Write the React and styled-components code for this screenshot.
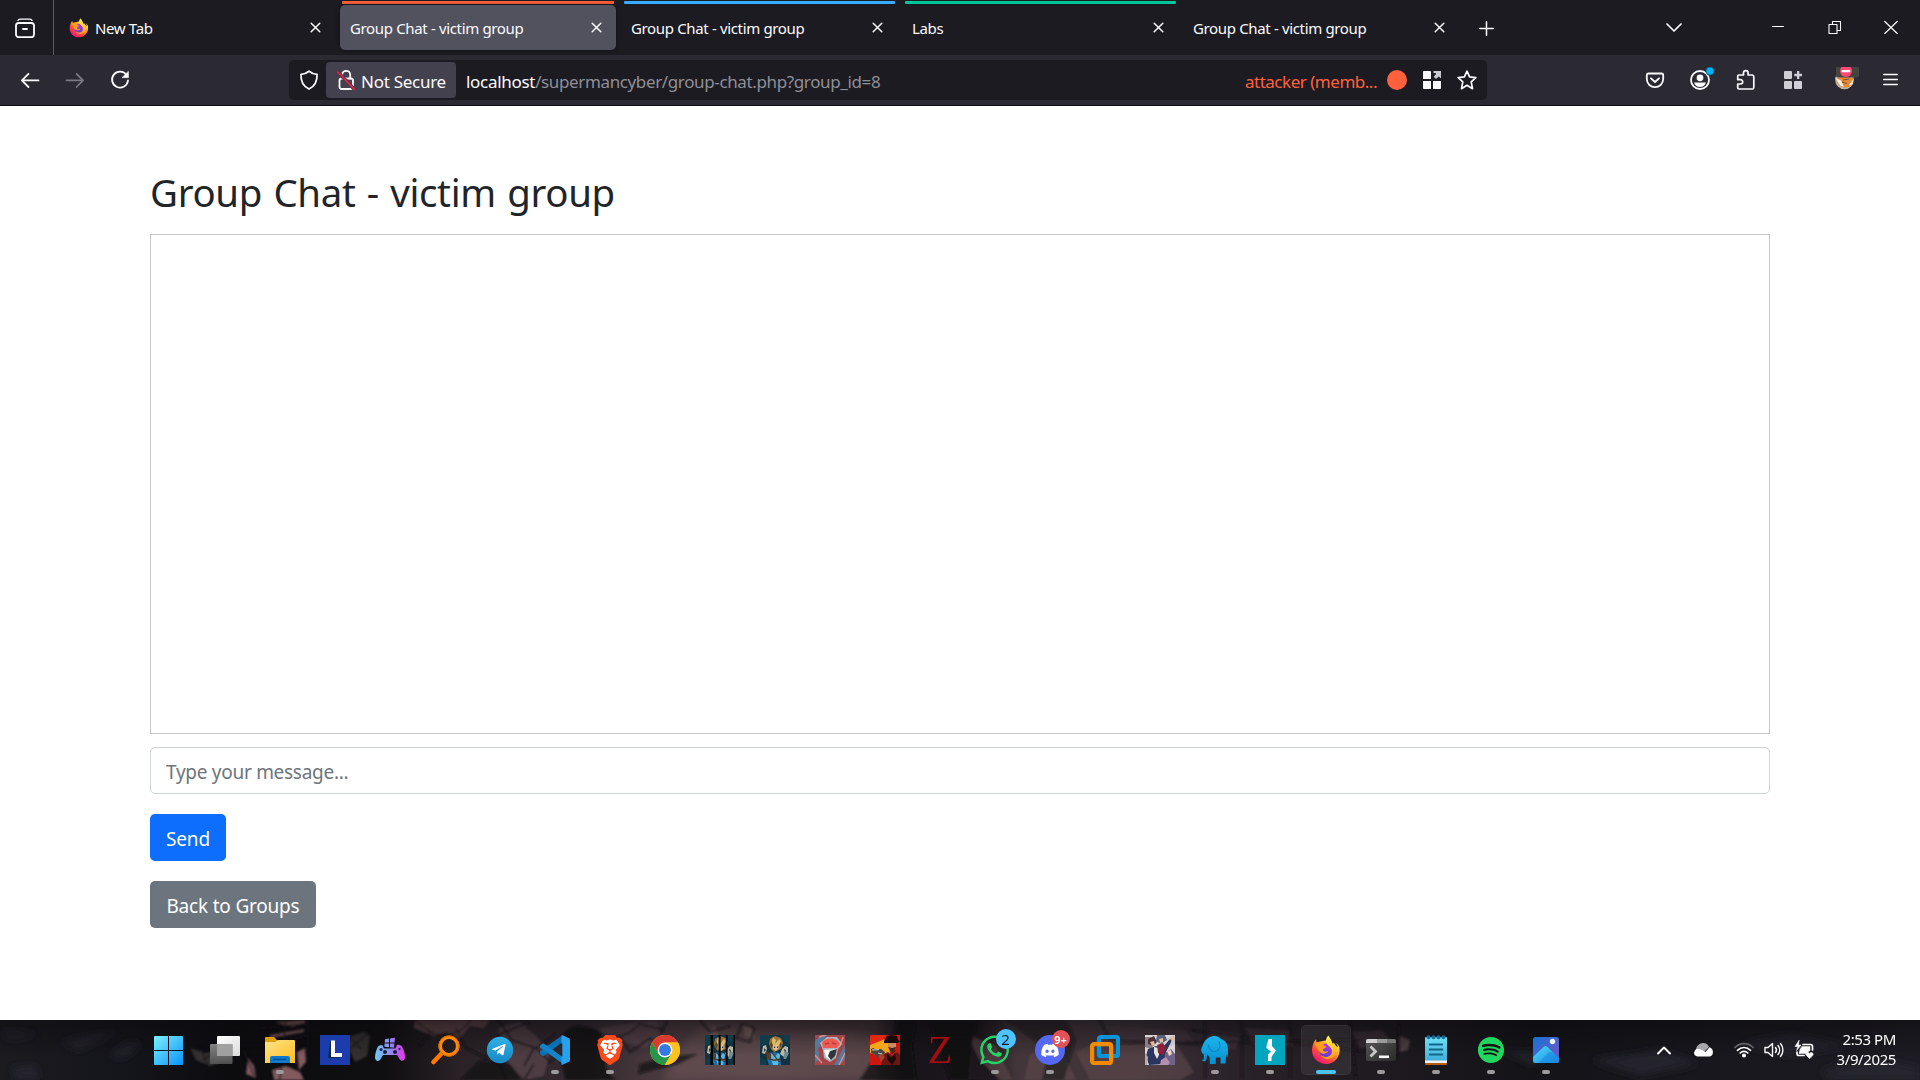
import React from "react";
import styled, { createGlobalStyle, css } from "styled-components";
import { FaDiscord, FaSpotify, FaWhatsapp, FaTelegramPlane } from "react-icons/fa";
import { SiBrave } from "react-icons/si";

const Global = createGlobalStyle`
  *, *::before, *::after { box-sizing: border-box; }
  html, body { margin: 0; padding: 0; height: 100%; overflow: hidden; }
  body { font-family: "Noto Sans", "Open Sans", sans-serif; background: #fff; }
  svg { display: block; flex: none; }
`;

const Screen = styled.div`
  width: 1920px;
  height: 1080px;
  display: flex;
  flex-direction: column;
  overflow: hidden;
`;

/* ---------- browser chrome ---------- */

const TabStrip = styled.header`
  height: 55px;
  display: flex;
  align-items: stretch;
  background: #1c1b22;
  color: #fbfbfe;
`;

const FirefoxView = styled.div`
  width: 54px;
  padding: 18px 0 0 15px;
  border-right: 1px solid #5b5b66;
`;

const Tab = styled.div`
  width: ${(p) => p.$w || 281}px;
  padding: 0 5px 0 0;
  display: flex;
  flex-direction: column;
`;

const TabLine = styled.div`
  height: 3px;
  margin: 1px 2px 1px ${(p) => (p.$active ? 2 : 3)}px;
  border-radius: 1px;
  background: ${(p) => p.$color || "transparent"};
`;

const TabBody = styled.div`
  height: 45px;
  padding: 0 14px 0 ${(p) => p.$pad || 10}px;
  display: flex;
  align-items: center;
  border-radius: 5px;
  ${(p) =>
    p.$active &&
    css`
      background: #52525e;
      box-shadow: 0 0 4px rgba(0, 0, 0, 0.45);
    `}
`;

const TabTitle = styled.span`
  flex: 1;
  font-size: 15px;
  line-height: 20px;
  padding-top: 1px;
  white-space: nowrap;
  letter-spacing: -0.35px;
`;

const Favicon = styled.span`
  width: 20px;
  margin-right: 6px;
`;

const NewTabButton = styled.div`
  padding: 21px 0 0 15px;
`;

const WindowControls = styled.div`
  margin-left: auto;
  display: flex;
  padding-top: 20px;
`;

const Control = styled.div`
  width: ${(p) => p.$w}px;
  display: flex;
  justify-content: center;
`;

const NavBar = styled.nav`
  height: 51px;
  display: flex;
  align-items: flex-start;
  background: #2b2a33;
  border-bottom: 1px solid #0d0c12;
  color: #fbfbfe;
`;

const NavButtons = styled.div`
  width: 289px;
  padding: 15px 0 0 20px;
  display: flex;
  gap: 25px;
`;

const UrlBar = styled.div`
  width: 1198px;
  height: 40px;
  margin-top: 5px;
  padding: 2px 10px 2px 10px;
  display: flex;
  align-items: center;
  border-radius: 5px;
  background: #1c1b22;
  font-size: 17px;
`;

const Insecure = styled.div`
  width: 130px;
  height: 36px;
  margin-left: 7px;
  padding-left: 11px;
  display: flex;
  align-items: center;
  gap: 5px;
  border-radius: 4px;
  background: #42414d;
  white-space: nowrap;
`;

const BarText = styled.span`
  padding-top: 3px;
  line-height: 24px;
  white-space: nowrap;
  color: ${(p) => p.$color || "#fbfbfe"};
  letter-spacing: ${(p) => p.$ls || -0.3}px;
`;

const Address = styled.div`
  flex: 1;
  margin-left: 10px;
  display: flex;
`;

const Dot = styled.span`
  width: 20px;
  height: 20px;
  margin: 0 16px 0 10px;
  border-radius: 50%;
  background: #ff613d;
`;

const StarSlot = styled.span`
  margin-left: 16px;
`;

const Actions = styled.div`
  margin-left: auto;
  padding: 12px 10px 0 0;
  display: flex;
  align-items: flex-start;
`;

const Action = styled.div`
  width: ${(p) => p.$w || 47}px;
  display: flex;
  justify-content: center;
`;

/* ---------- page ---------- */

const Page = styled.main`
  flex: 1;
  padding: 62px 150px 0;
  background: #fff;
  color: #212529;
`;

const Title = styled.h2`
  margin: 0 0 18px;
  font-size: 38.4px;
  line-height: 48px;
  font-weight: 400;
  letter-spacing: -0.3px;
  word-spacing: 1.600px;
`;

const ChatBox = styled.section`
  height: 500px;
  border: 1px solid #ccc;
`;

const MessageInput = styled.input`
  display: block;
  width: 100%;
  height: 47px;
  margin: 13px 0 20px;
  padding: 2px 15px 0;
  border: 1px solid #ced4da;
  border-radius: 5px;
  outline: 0;
  font: 400 19px/30px "Noto Sans", sans-serif;
  letter-spacing: -0.28px;
  &::placeholder {
    color: #6c757d;
    opacity: 1;
  }
`;

const Button = styled.button`
  display: block;
  width: ${(p) => p.$w}px;
  height: 47px;
  margin: 0 0 20px;
  padding: 3px 0 0;
  border: 0;
  border-radius: 5px;
  background: ${(p) => p.$bg};
  color: #fff;
  text-align: center;
  font: 400 19px/30px "Noto Sans", sans-serif;
  letter-spacing: -0.2px;
`;

/* ---------- taskbar ---------- */

const Taskbar = styled.footer`
  height: 60px;
  position: relative;
  display: flex;
  color: #fff;
  background: #17161a;
`;

const Wallpaper = styled.svg`
  position: absolute;
  inset: 0;
`;

const Apps = styled.div`
  position: relative;
  display: flex;
  padding-left: 140.5px;
`;

const AppButton = styled.div`
  position: relative;
  width: ${(p) => p.$w || 55}px;
  height: ${(p) => (p.$active ? 50 : 60)}px;
  margin: ${(p) => (p.$active ? "5px 2.5px 0 3.5px" : "0")};
  padding-top: ${(p) => (p.$active ? 10 : 15)}px;
  display: flex;
  flex-direction: column;
  align-items: center;
  gap: 5px;
  border-radius: 5px;
  ${(p) =>
    p.$active &&
    css`
      background: rgba(255, 255, 255, 0.07);
      box-shadow: inset 0 0 0 1px rgba(255, 255, 255, 0.05);
    `}
`;

const Pill = styled.span`
  width: ${(p) => (p.$active ? 20 : 8)}px;
  height: 4px;
  border-radius: 2px;
  background: ${(p) => (p.$active ? "#4cc2ff" : "#9d9a9b")};
`;

const Badge = styled.span`
  position: absolute;
  top: ${(p) => p.$top}px;
  left: ${(p) => p.$left}px;
  width: ${(p) => p.$size}px;
  height: ${(p) => p.$size}px;
  border-radius: 50%;
  display: flex;
  align-items: center;
  justify-content: center;
  background: ${(p) => p.$bg};
  color: ${(p) => p.$fg};
  font-size: ${(p) => p.$font}px;
  font-weight: ${(p) => p.$weight || 400};
  line-height: 1;
`;

const Tray = styled.div`
  position: relative;
  margin-left: auto;
  padding-right: 24px;
  display: flex;
  align-items: center;
`;

const TrayIcon = styled.div`
  width: ${(p) => p.$w}px;
  display: flex;
  justify-content: center;
`;

const Clock = styled.div`
  width: 72px;
  padding-bottom: 2px;
  text-align: right;
  font-size: 15px;
  line-height: 20px;
  letter-spacing: -0.4px;
  white-space: nowrap;
`;

/* ---------- chrome icons ---------- */

const Line = ({ w = 20, h = w, vb, sw = 1.6, color = "#fbfbfe", children }) => (
  <svg width={w} height={h} viewBox={vb || `0 0 ${w} ${h}`} fill="none" stroke={color}
    strokeWidth={sw} strokeLinecap="round" strokeLinejoin="round">
    {children}
  </svg>
);

const CloseIcon = () => (
  <Line w={11} sw={1.5}><path d="M1.200 1.200l8.600 8.600M9.800 1.200L1.200 9.800" /></Line>
);

const Firefox = ({ size, id }) => (
  <svg width={size} height={size} viewBox="0 0 30 30">
    <defs>
      <linearGradient id={`${id}a`} x1="0.85" y1="0.1" x2="0.2" y2="0.95">
        <stop offset="0" stopColor="#fff44f" />
        <stop offset="0.35" stopColor="#ffa51f" />
        <stop offset="0.65" stopColor="#ff4a3d" />
        <stop offset="1" stopColor="#e8107c" />
      </linearGradient>
      <linearGradient id={`${id}b`} x1="0.7" y1="0" x2="0.3" y2="1">
        <stop offset="0" stopColor="#b833e1" />
        <stop offset="1" stopColor="#5b3fd6" />
      </linearGradient>
      <linearGradient id={`${id}c`} x1="0.5" y1="0" x2="0.8" y2="1">
        <stop offset="0" stopColor="#fff14a" />
        <stop offset="0.6" stopColor="#ffc52a" />
        <stop offset="1" stopColor="#ff8a1d" />
      </linearGradient>
    </defs>
    <path fill={`url(#${id}a)`} d="M28.5 12.5c-.6-2-2-3.700-3.200-4.600.9 1.700 1.400 3 1.400 4.300L17 5 5.600 7.200C5.200 6.400 5 5.400 5.100 4 2.800 6.200 1.400 10 1 14.600.6 23 7 29 15 29c8.500 0 14.800-7.500 13.500-16.500z" />
    <path fill={`url(#${id}b)`} d="M9 12c2-4 9-5 12-1 3 5 0 11-6 11S7 17 9 12z" />
    <path fill={`url(#${id}c)`} d="M17.500.5c-3 2.500-3 6.500-1.500 8.500 2 2.500 4.700 3.500 5 7 .2 3.500-2.500 6-6 6-2.500 0-4-1-5-2 2 5.500 11 5.500 14 0 2.500-4.500 1.500-9.500-1.500-12.500-.2 1-.5 1.500-1 2C21.500 6 19 3.500 17.500.5z" />
    <path fill="#ff9a22" d="M4.200 8.200c2-1.400 4.600-.9 6 .6 1.500-.8 3-.8 4-.4-1.200.5-1.800 1.400-1.900 2 1.200.6 3.200.6 3.200 1.300-.2 1.200-2.400 1.500-3.400 2.400-.4 1 .2 2 1.400 2.300 1.500.2 2.500-.6 3.700-.1-1 2.400-5 3.500-7.700 1.500C7 16 5 11 4.200 8.200z" />
  </svg>
);

const FirefoxViewIcon = () => (
  <Line w={20} sw={1.8}>
    <path d="M3 2.300c.5-.8 1.200-1.200 2.200-1.200h9.600c1 0 1.700.4 2.200 1.200" strokeWidth="1.400" />
    <rect x="1" y="5" width="18" height="14.200" rx="2.600" /><path d="M8 11h4" />
  </Line>
);

const BackIcon = () => (
  <Line w={20} sw={1.8}><path d="M18.500 10.400H2M8.500 3.800L1.900 10.400l6.600 6.600" /></Line>
);
const ForwardIcon = () => (
  <Line w={20} sw={1.7} color="#7c7b84"><path d="M1.500 10.400H18M11.500 3.800l6.600 6.600-6.600 6.600" /></Line>
);
const ReloadIcon = () => (
  <Line w={20} sw={1.8}>
    <path d="M16.600 5A8 8 0 1 0 18 10.500" /><path d="M18.300 1.800v5.800h-5.800z" fill="#fbfbfe" strokeWidth=".8" />
  </Line>
);

const ShieldIcon = () => (
  <Line w={20} sw={1.8}>
    <path d="M10 1.200c2.300 1.900 5 3 8 3.200.3 6.600-2.200 12-8 14.600C4.200 16.400 1.700 11 2 4.400c3-.2 5.700-1.300 8-3.200z" />
  </Line>
);

const LockIcon = () => (
  <Line w={19} h={22} sw={1.8}>
    <rect x="2.500" y="9.500" width="13.500" height="10.500" rx="2" />
    <path d="M5.200 9.500V5.800a4 4 0 0 1 8 0v3.700" />
    <path d="M.8 3L17.500 20.500" stroke="#42414d" strokeWidth="3.600" />
    <path d="M.8 3L17.500 20.500" stroke="#ff1a45" strokeWidth="1.500" />
  </Line>
);

const ContainerIcon = () => (
  <svg width="18" height="18" viewBox="0 0 18 18">
    <path fill="#fbfbfe" d="M0 1a1 1 0 0 1 1-1h6a1 1 0 0 1 1 1v7H0zM0 10h8v8H1a1 1 0 0 1-1-1zM10 10h8v7a1 1 0 0 1-1 1h-7z" />
    <path fill="#c9c9d0" d="M10.500 0H18v7.500L15.700 5.500 13 8l-2.300-2.300L13 3.200 12.500 2h-2z" />
  </svg>
);

const StarIcon = () => (
  <Line w={20} sw={1.7}>
    <path d="M10 1.200l2.600 5.700 6.200.7-4.600 4.200 1.300 6.900L10 15.300l-5.500 3.400 1.300-6.900L1.200 7.600l6.200-.7z" />
  </Line>
);

const PocketIcon = () => (
  <Line w={20} h={30} sw={1.8}>
    <path d="M3.500 6.500h13a1.700 1.700 0 0 1 1.700 1.700V12a8.200 8.200 0 0 1-16.400 0V8.200a1.700 1.700 0 0 1 1.700-1.700z" />
    <path d="M6 11.300l4 3.700 4-3.700" />
  </Line>
);

const AccountIcon = () => (
  <svg width="26" height="30" viewBox="0 0 26 30">
    <circle cx="11" cy="13" r="9" fill="none" stroke="#fbfbfe" strokeWidth="1.8" />
    <circle cx="11" cy="10.800" r="3.400" fill="#fbfbfe" />
    <path d="M5 15.500h12c-1 3.200-3.200 4.500-6 4.500s-5-1.300-6-4.500z" fill="#fbfbfe" />
    <circle cx="21" cy="4" r="4.500" fill="#075985" /><circle cx="21" cy="4" r="3.500" fill="#00b3f4" />
  </svg>
);

const PuzzleIcon = () => (
  <Line w={20} h={30} sw={1.7}>
    <path d="M3 8h4.500V6a2.300 2.300 0 0 1 4.600 0v2H16a1.800 1.800 0 0 1 1.800 1.800v10.700A1.500 1.500 0 0 1 16.300 22H3a1.300 1.300 0 0 1-1.300-1.300V17H4.500a2.200 2.200 0 0 0 0-4.400H1.700V9.300A1.300 1.300 0 0 1 3 8z" />
  </Line>
);

const GridPlusIcon = () => (
  <svg width="18" height="30" viewBox="0 0 18 30" fill="#cfcfd5">
    <rect y="4" width="8" height="8" rx="1" /><rect y="14" width="8" height="8" rx="1" /><rect x="10" y="14" width="8" height="8" rx="1" />
    <path d="M13 4h2.300v2.800H18v2.400h-2.700V12H13V9.200h-2.700V6.800H13z" />
  </svg>
);

const FoxIcon = () => (
  <svg width="24" height="30" viewBox="0 0 24 30">
    <circle cx="9.500" cy="13" r="9.300" fill="#bdb4ad" />
    <path d="M1 12c4-3 14-3 17.500 0-1 6-4 8.500-8.500 8.500S2 18 1 12z" fill="#e88a36" />
    <path d="M0 10.500l6 3 3 6.500-4-1.500zM18.500 12l-5 7 4-2z" fill="#fff2e4" />
    <path d="M7 15l5 1.500M8 13l6-1" stroke="#7b5138" strokeWidth="1.200" />
    <rect x="1" y="-3" width="23" height="13.500" rx="2" fill="#45443f" />
    <circle cx="11" cy="4" r="6" fill="#ff4775" /><rect x="6.500" y="3" width="9" height="2.200" rx="1" fill="#fff" />
  </svg>
);

/* ---------- taskbar icons ---------- */

const Ico = ({ children }) => <svg width="30" height="30" viewBox="0 0 30 30">{children}</svg>;

const Grad = ({ id, from, to, x2 = 1, y2 = 1 }) => (
  <linearGradient id={id} x1="0" y1="0" x2={x2} y2={y2}>
    <stop offset="0" stopColor={from} /><stop offset="1" stopColor={to} />
  </linearGradient>
);

const StartIcon = () => (
  <Ico>
    <defs>
      <linearGradient id="win" gradientUnits="userSpaceOnUse" x1="0" y1="0" x2="29" y2="30">
        <stop offset="0" stopColor="#7df0fe" /><stop offset="1" stopColor="#0a93fb" />
      </linearGradient>
    </defs>
    <path fill="url(#win)" d="M1 1h13v14H0V2a1 1 0 0 1 1-1zM15 1h13a1 1 0 0 1 1 1v13H15zM0 16h14v14H1a1 1 0 0 1-1-1zM15 16h14v13a1 1 0 0 1-1 1H15z" />
  </Ico>
);

const TaskViewIcon = () => (
  <Ico>
    <defs><Grad id="tv" from="#fff" to="#dadada" /><Grad id="tv2" from="#8b8b8b" to="#545454" x2={0} /></defs>
    <rect x="7" y="1" width="23" height="20" rx="1" fill="url(#tv)" />
    <rect x="0" y="9" width="22.500" height="20" rx="1" fill="url(#tv2)" opacity=".93" />
    <rect x="7" y="9" width="15.500" height="12" fill="#a0a0a0" />
  </Ico>
);

const ExplorerIcon = () => (
  <Ico>
    <defs><Grad id="ex" from="#ffe48a" to="#ffbe1b" /></defs>
    <path d="M0 3a1 1 0 0 1 1-1h8l3.500 3.500V12H0z" fill="#dfa00b" />
    <path d="M0 7h10l3-2h16a1 1 0 0 1 1 1v22H0z" fill="url(#ex)" />
    <path d="M5 28v-5a2 2 0 0 1 2-2h16a2 2 0 0 1 2 2v5z" fill="#0f79cf" />
    <rect x="8" y="23.800" width="13.500" height="1.300" rx=".6" fill="#0b4a85" />
  </Ico>
);

const LIcon = () => (
  <Ico>
    <rect width="30" height="30" fill="#1c3cae" />
    <path d="M10 7l1-1v16h9v1H8z" fill="#0b2c50" />
    <path d="M11 5.500h4V18h7v4H11z" fill="#fff" />
  </Ico>
);

const GamepadIcon = () => (
  <Ico>
    <defs>
      <linearGradient id="gp" gradientUnits="userSpaceOnUse" x1="0" y1="0" x2="30" y2="0">
        <stop offset="0" stopColor="#6fc9f5" /><stop offset=".5" stopColor="#8f8df0" /><stop offset=".75" stopColor="#b45cf5" /><stop offset="1" stopColor="#ef35e3" />
      </linearGradient>
    </defs>
    <path fill="url(#gp)" d="M10 4.300l4-.7v3.900h-4.300zM15 3.400l5-.6-.5 4.700H15zM9.600 8.400H14v3.800l-4.600-.5zM15 8.400h4.400l-.3 4.300-4.100-.5z" />
    <path fill="url(#gp)" d="M3 11.500c1-1.200 2.500-1.500 4.500-1.300l1.500 3.200h11.500l1.500-3.600c2-.2 3.700.3 4.700 1.500C29 15 30 19 30 22c0 4-3.500 5-5.500 2l-2.300-4H8l-2.300 4C3.500 27.500.2 26 0 22.500 0 19 1.300 14.500 3 11.500z" />
    <g fill="#1b1e3a"><circle cx="10" cy="17" r="2" /><circle cx="20" cy="17" r="2" /><circle cx="24.500" cy="14" r="1.100" /><circle cx="6" cy="14.500" r="1.500" /></g>
  </Ico>
);

const SearchIcon = () => (
  <Ico>
    <path d="M12.500 17.500L3.500 27" stroke="#ff7a00" strokeWidth="4.500" strokeLinecap="round" />
    <circle cx="19" cy="11" r="8.800" fill="none" stroke="#ff8a0a" strokeWidth="3.600" />
    <circle cx="19" cy="11" r="10.200" fill="none" stroke="#d96300" strokeWidth="1" />
  </Ico>
);

const TelegramIcon = () => (
  <Ico>
    <defs><Grad id="tg" from="#2fb0e6" to="#1789c4" x2={0} /></defs>
    <circle cx="15" cy="15" r="13.200" fill="url(#tg)" />
    <FaTelegramPlane x="6" y="7" size={15.5} color="#fff" />
  </Ico>
);

const VscodeIcon = () => (
  <Ico>
    <path d="M.3 17.500l2.900-2.200L23 1.500v7L4 22.300a1.400 1.400 0 0 1-1.800-.1L.4 20.500a1.400 1.400 0 0 1-.1-3z" transform="translate(0 -1.500)" fill="#0a6fb5" />
    <path d="M.3 12.500a1.400 1.400 0 0 1 0-2l1.900-1.700A1.400 1.400 0 0 1 4 8.700L23 22v7z" fill="#1284ca" />
    <path d="M22 0l7 3.300a1.800 1.800 0 0 1 1 1.600v20.200a1.800 1.800 0 0 1-1 1.600L22 30c-.6-.3-.5-.8-.5-1V1c0-.4 0-.8.5-1z" fill="#27a2ec" />
    <path d="M22.300 8.300v13.400L13.600 15z" fill="#2d2529" />
  </Ico>
);

const BraveIcon = () => (
  <Ico>
    <path d="M8 4h14l3 6-4 13-6 4-6-4L5 10z" fill="#fff" />
    <SiBrave x="0" y="0" size={30} color="#fb4a1c" />
  </Ico>
);

const ChromeIcon = () => (
  <Ico>
    <circle cx="15" cy="15" r="15" fill="#fcc31e" />
    <path d="M2 7.500A15 15 0 0 1 28 7.500H15L8.500 18.800z" fill="#db3a2f" />
    <path d="M2 7.500A15 15 0 0 0 14.800 30l6.700-11.300L8.500 18.700z" fill="#23964a" />
    <path d="M15 7.500H28A15 15 0 0 1 14.800 30l6.700-11.300z" fill="#fcc31e" />
    <circle cx="15" cy="15" r="7.400" fill="#fff" /><circle cx="15" cy="15" r="6" fill="#3478e6" />
  </Ico>
);

const HeroIcon = ({ bars }) => (
  <Ico>
    <rect width="30" height="30" fill="#0f3440" />
    <path d="M0 0h12l-4 8-8 3zM22 0h8v9l-6-3zM0 22l6 3v5H0z" fill="#123c4a" />
    <path d="M3 11l3-1 1 4-2 5-3-1zM22 14l3-3 3 1v6l-4 4-4-3z" fill="#bdb7a8" />
    <path d="M25 16l4 2-3 6h-3z" fill="#6e8d92" /><path d="M4 13l2 2-2 2zM24 14l2 1-1 3z" fill="#293d42" />
    <path d="M10 4l5-3 6 2 2 5-2 6-7 3-3-3-2-5z" fill="#9b7338" />
    <path d="M13 2l3 3-1 4 4-5 2 2-3 6-5 2-2-5z" fill="#dab866" /><path d="M11 6l2 4-1 4-2-4zM20 8l2 1-2 4z" fill="#5b4325" />
    <path d="M13.500 10h4.500l1 3-3 3-3-2z" fill="#e3bf95" /><path d="M14 11.500h1.200v1.500H14zM17 11.500h1.200v1.500H17z" fill="#29384a" />
    <path d="M9 18l5-1 5 1 4 5-1 7H9l-2-6z" fill="#1c6fa8" />
    <path d="M12 18l3 4 3-4 2 2-2 10h-5l-3-9z" fill="#55b9e4" />
    <path d="M6 16l5 3v4l-4 2z" fill="#5e3d28" /><path d="M9 23l5 1.500 6-1v1.500l-6 1-5-1.500zM12 17l8 10h-1.500l-7-9z" fill="#543620" />
    <path d="M20 20l3 2 2 5-2 3h-2z" fill="#14303c" />
    {bars && <path d="M5.500 0h2.500v30H5.500zM13.500 0h2.200v30h-2.200zM20.800 0h1.800v30h-1.800zM28.500 0H30v30h-1.500z" fill="#030405" />}
  </Ico>
);

const MaskIcon = () => (
  <Ico>
    <rect width="30" height="30" fill="#a54446" />
    <path d="M0 6l6-6h6L3 14l2 10-5 4zM30 10l-5 9-6 11h6l5-6z" fill="#56789a" />
    <path d="M4 2l7-2M0 20l7 8M28 2l-3 9M24 30l6-12" stroke="#d88d86" strokeWidth="1.500" />
    <path d="M5 8l7-6h10l5 7-4 5-2 9-6 4-6-4-1-8z" fill="#aab6be" />
    <path d="M7 8c2-5 14-7 18 1l-3 4H8z" fill="#ee5a50" />
    <path d="M10 9l4-1M17 8l4 1" stroke="#b93c3a" strokeWidth="1.500" />
    <path d="M9 15l13-1-3 7-4 4-4-3z" fill="#fafafa" /><path d="M15 16l7-2-2 7-4 4-3-4z" fill="#30343b" />
  </Ico>
);

const OutlawIcon = () => (
  <Ico>
    <rect width="30" height="30" fill="#cf1610" />
    <path d="M0 10L10 3l8 3 2 14H7l-7-2z" fill="#f5a51c" /><path d="M2 0h14l-3 5L0 10V2z" fill="#e02a14" />
    <path d="M14 6l3-5 4-1 6 1 1 4 2 1-2 2H14z" fill="#170b0a" />
    <path d="M18 8h8v6l-3 4-4-2z" fill="#c88d62" /><path d="M18 12l4 1 4-1-1 5-3 2z" fill="#4a241a" />
    <path d="M11 30l3-11 4-2 4 4 5-4 3 3v10z" fill="#6b1713" /><path d="M17 18l4 5 4-5 1 6-4 6-5-6z" fill="#1d0a0a" />
    <path d="M1 14l2-1 2 1h6l4 3-1 3-3-1-1 3-3 1-1-3-5-2z" fill="#4b4543" /><path d="M2 15l7-.3M8 18l4 1" stroke="#d8d2c8" />
    <path d="M8 21l4-2 3 3-4 5z" fill="#a5432f" />
  </Ico>
);

const ZLetter = styled.span`
  width: 30px;
  height: 30px;
  display: flex;
  align-items: center;
  justify-content: center;
  font: 400 40px/30px "Liberation Serif", serif;
  color: #a30c10;
`;

const WhatsIcon = () => (
  <Ico>
    <FaWhatsapp x="-2" y="-1.500" size={33} color="#25d366" />
  </Ico>
);

const DiscordIcon = () => (
  <Ico>
    <circle cx="15" cy="15" r="15" fill="#5468f2" />
    <FaDiscord x="5.500" y="6" size={19} color="#fff" />
  </Ico>
);

const VmwareIcon = () => (
  <Ico>
    <rect x="9" y="2" width="19" height="19" rx="2" fill="none" stroke="#0a94d8" strokeWidth="4.200" />
    <rect x="2.100" y="9.100" width="19" height="19" rx="2" fill="none" stroke="#f38b00" strokeWidth="4.200" />
    <path d="M9 13.500V19a2 2 0 0 0 2 2h7.500" fill="none" stroke="#0a94d8" strokeWidth="4.200" />
  </Ico>
);

const AttorneyIcon = () => (
  <Ico>
    <rect width="30" height="30" fill="#d9d5d6" />
    <path d="M0 2h6l4 6-4 6-6-2z" fill="#8a7f86" /><path d="M3 4l6-3 3 6-4 4-5-2z" fill="#4d3037" /><path d="M5 7l4-1 1 4-3 1z" fill="#e0b79c" />
    <path d="M12 0h8l2 5-6 4-5-3z" fill="#59627a" /><path d="M14 4l4-1v4l-3 1z" fill="#e2bda4" /><path d="M22 3l8-3v9l-5 3z" fill="#c9c5cc" />
    <path d="M3 14l8-3 6 2 8-9 3-1-7 14-1 12-16 1-3-9z" fill="#2c3560" /><path d="M9 12l5 1v7l-2 4-3-6z" fill="#e8e2e0" />
    <path d="M12 10l6-2 3 5-3 7-5-2z" fill="#8c2238" /><path d="M25 4l4-3 .5 3-3 2z" fill="#e3b492" />
    <path d="M20 18l6-4 4 5v11H19z" fill="#6f6488" /><path d="M22 16l4-1 1 4-3 2z" fill="#edd2bd" />
    <path d="M16 25l5-3 4 6-2 2h-8z" fill="#b58fae" /><path d="M0 18l3 4-1 8H0z" fill="#b9a9a4" />
  </Ico>
);

const ElephantIcon = () => (
  <Ico>
    <defs><Grad id="el" from="#1cb5ec" to="#078fd2" x2={0} /></defs>
    <path fill="url(#el)" d="M9 2.500c4-2.500 9.500-2 12 1.500 5 1.500 7 6 7 11 0 3.500 0 6-1 8l-.8-4-.7 9.500h-5V22.500h-4.700V29H10l-.5-7-2.500-3-.5 5.500c-1 2.500-3.800 2.500-4.500.5l1.500-.7c.5-1 .4-3.300 0-5.300C1 18 .5 14 2.500 11c1-3.500 3-6.800 6.500-8.500z" />
    <path d="M8 9.500c1.500 6 5 8.500 9 6.500 3-2 3.500-6 2-9.500" fill="none" stroke="#0c84bf" strokeWidth="1.100" />
  </Ico>
);

const BurpIcon = () => (
  <Ico>
    <rect width="30" height="30" fill="#02a5bd" />
    <path d="M13.500 4h3.500v7l4 4.500L16.500 22v4H13v-6.500l3-3-4.500-3.500v-2z" fill="#fff" />
    <path d="M12 11l1.500-5 3.500 5-3.500 3.500z" fill="#fff" />
  </Ico>
);

const TerminalIcon = () => (
  <Ico>
    <defs><Grad id="tm" from="#565656" to="#2b2b2b" /></defs>
    <rect x="0" y="4" width="30" height="22" rx="2" fill="url(#tm)" />
    <path d="M2 4h9v4H0V6a2 2 0 0 1 2-2z" fill="#cfcfcf" /><path d="M11 4h10v4H11z" fill="#9b9b9b" /><path d="M21 4h7a2 2 0 0 1 2 2v2h-9z" fill="#767676" />
    <path d="M4.500 11.500l5 5-5 5" fill="none" stroke="#c9c9c9" strokeWidth="2.800" />
    <rect x="13" y="20.500" width="10" height="2.600" fill="#fff" />
  </Ico>
);

const NotepadIcon = () => (
  <Ico>
    <defs><Grad id="np" from="#6fe0f7" to="#41afd8" x2={0} /></defs>
    <rect x="4" y="24" width="22" height="6" rx="1" fill="#b05e12" /><rect x="4" y="23" width="22" height="5" fill="#f2f2f2" />
    <rect x="4" y="2" width="22" height="23.500" rx="1" fill="url(#np)" />
    <g fill="#1b6f9a"><circle cx="7.500" cy="2.200" r="2" /><circle cx="12.500" cy="2.200" r="2" /><circle cx="17.500" cy="2.200" r="2" /><circle cx="22.500" cy="2.200" r="2" /></g>
    <path d="M8 9.500h14M8 14.500h14M8 19.500h14" stroke="#0f6688" strokeWidth="1.800" />
  </Ico>
);

const SpotifyIcon = () => (
  <Ico>
    <circle cx="15" cy="15" r="12" fill="#141414" />
    <FaSpotify x="1.500" y="1.500" size={27} color="#1ed760" />
  </Ico>
);

const PhotosIcon = () => (
  <Ico>
    <defs>
      <Grad id="ph" from="#1473d4" to="#7d52c4" /><Grad id="ph2" from="#51d8fb" to="#1385dd" />
      <clipPath id="phc"><rect x="2" y="2" width="26" height="26" rx="2.500" /></clipPath>
    </defs>
    <g clipPath="url(#phc)">
      <rect x="2" y="2" width="26" height="26" fill="url(#ph)" />
      <path d="M2 22l10.500-10a3 3 0 0 1 4 0L30 25v5H2z" fill="url(#ph2)" />
      <path d="M5 30l12-12q3-2 6 0l7 6v6z" fill="#1686e0" opacity=".55" />
      <circle cx="21.500" cy="6.500" r="2.700" fill="#e9f1fb" />
    </g>
  </Ico>
);

/* ---------- data ---------- */

const tabs = [
  { title: "Group Chat - victim group", color: "#ff613d", active: true },
  { title: "Group Chat - victim group", color: "#37adff" },
  { title: "Labs", color: "#00c79a" },
  { title: "Group Chat - victim group" },
];

const apps = [
  { icon: <StartIcon />, w: 57 },
  { icon: <TaskViewIcon /> },
  { icon: <ExplorerIcon />, open: true },
  { icon: <LIcon /> },
  { icon: <GamepadIcon /> },
  { icon: <SearchIcon /> },
  { icon: <TelegramIcon /> },
  { icon: <VscodeIcon />, open: true },
  { icon: <BraveIcon />, open: true },
  { icon: <ChromeIcon /> },
  { icon: <HeroIcon bars /> },
  { icon: <HeroIcon /> },
  { icon: <MaskIcon /> },
  { icon: <OutlawIcon /> },
  { icon: <ZLetter>Z</ZLetter> },
  { icon: <WhatsIcon />, open: true, badge: { text: "2", $top: 9, $left: 28, $size: 20, $bg: "#4cc2ff", $fg: "#101820", $font: 15 } },
  { icon: <DiscordIcon />, open: true, badge: { text: "9+", $top: 10, $left: 29, $size: 18, $bg: "#e05257", $fg: "#fff", $font: 11, $weight: 700 } },
  { icon: <VmwareIcon /> },
  { icon: <AttorneyIcon /> },
  { icon: <ElephantIcon />, open: true },
  { icon: <BurpIcon />, open: true },
  { icon: <Firefox size={30} id="task" />, open: true, active: true, w: 50 },
  { icon: <TerminalIcon />, open: true },
  { icon: <NotepadIcon />, open: true },
  { icon: <SpotifyIcon />, open: true },
  { icon: <PhotosIcon />, open: true },
];

const Backdrop = () => (
  <Wallpaper width="1920" height="60" viewBox="0 0 1920 60" preserveAspectRatio="none">
    <defs>
      <linearGradient id="sky" x1="0" x2="1" y1="0" y2="0">
        <stop offset="0" stopColor="#1b1b20" /><stop offset=".06" stopColor="#15161b" />
        <stop offset=".12" stopColor="#0c0c0f" /><stop offset=".2" stopColor="#0f0e11" />
        <stop offset=".24" stopColor="#2a2227" /><stop offset=".3" stopColor="#33292e" />
        <stop offset=".35" stopColor="#4b3b40" /><stop offset=".4" stopColor="#4f3f43" />
        <stop offset=".455" stopColor="#443538" /><stop offset=".47" stopColor="#18141a" />
        <stop offset=".51" stopColor="#1c171b" /><stop offset=".53" stopColor="#43363a" />
        <stop offset=".59" stopColor="#40343a" /><stop offset=".64" stopColor="#2a2329" />
        <stop offset=".73" stopColor="#1d191e" /><stop offset=".8" stopColor="#131318" />
        <stop offset="1" stopColor="#1d1c23" />
      </linearGradient>
      <linearGradient id="top" x1="0" x2="0" y1="0" y2="1">
        <stop offset="0" stopColor="#0b0a0d" stopOpacity=".5" /><stop offset=".6" stopColor="#0b0a0d" stopOpacity="0" />
      </linearGradient>
      <filter id="soft"><feGaussianBlur stdDeviation="1.1" /></filter>
      <filter id="haze"><feGaussianBlur stdDeviation="4" /></filter>
    </defs>
    <rect width="1920" height="60" fill="url(#sky)" />
    <g filter="url(#haze)">
      <g fill="#2b2c36" opacity=".7">
        <path d="M10 48l26-3 3 14-22 1zM108 36l22-14 12 2-18 14zM60 22l60-12-40 20zM0 10l40 4-30 6z" />
        <path d="M1590 40l70-10 40 14-60 12zM1740 24l50-10 60 12-60 10zM1820 50l60-10 40 8v12h-90zM1500 30l60 4-30 10z" />
      </g>
      <path d="M700 6c26-4 40 4 60 8s80-8 120 6l-4 40H664l8-20z" fill="#6a5457" opacity=".6" />
    </g>
    <g filter="url(#soft)">
      <g fill="#45403f"><path d="M190 28l16 5 12-3 12 9-20 7-14-6zM344 18l20-6 6 4-3 20-12 6z" opacity=".7" /></g>
      <g fill="#825a5e">
        <path d="M270 15l34-6v3l-34 6zM275 2l30-2v3l-12 4zM248 38l6 8 2 12-10-4zM272 50l14-4 14 6 4 8h-30zM297 32l8-4 1 14-7 8z" />
      </g>
      <path d="M414 0h76l-6 8-14-2-10 12-14-6-12 4-20-8z" fill="#694b50" opacity=".8" />
      <path d="M498 8l22-6 16 14 14 16-6 24-20 4-18-20z" fill="#4d3c42" />
      <path d="M600 8l56-8 4 14-14 14-20-6-20 4z" fill="#5b464c" opacity=".8" />
      <path d="M743 4l8 4 4 10-10-2zM706 20l8-14 6 12z" fill="#7d6466" opacity=".8" />
      <path d="M972 16l24 10 16 34h-44zM1030 34l30-8 16 34h-52zM1076 32l30-14 70 6 18 28-14 8h-90z" fill="#5d484b" opacity=".6" />
      <path d="M1105 6l80 4 8 10-70 4zM1210 10l30 4-4 16-28-4zM1245 8l44 2 4 16-40-2zM1352 12l30-2 14 16-36 2z" fill="#4d3d42" opacity=".55" />
      <path d="M1400 16l10 4-2 10-8 2z" fill="#5a4a4e" opacity=".8" />
      <g fill="#100f13">
        <path d="M560 40c-6-24 8-36 22-34s26 8 24 28 4 20 10 26h-50z" opacity=".8" />
        <path d="M640 44l30-8 28-2-20 10-40 10z" opacity=".7" /><path d="M460 60l20-20 30 4 12 16z" opacity=".7" />
        <path d="M860 60l10-16 20-6 6-38h20l-4 26 4 34z" opacity=".75" />
        <path d="M928 0h50l-6 24 8 16 20 20h-50z" opacity=".75" />
        <path d="M1006 0h60l10 20-12 40h-22l6-30-20-14z" opacity=".5" />
      </g>
      <g stroke="#171318" fill="none" strokeWidth="1.600" opacity=".85">
        <path d="M414 0q10 8 20 14q14 2 24-2q8-4 12-12M430 12l-10 14M456 8l10 20 20 10 14-24 30-12M486 38l16 8 10-26 24 8 20-14M512 20l-14-20M524 46l10-18M500 46l6 14M534 44l-10 16M536 28l14 14 10-10" />
        <path d="M590 10q20 8 30 6t20-12l24 6M620 16l10 16 20-14 20 14M660 14l8-14M700 0l10 12 20-6M742 4l-6 14 14 4 4-14z" />
        <path d="M200 26l8 20M220 30l-18 10M244 30l10 26M262 8l44-4M266 24l40-8M286 0l-6 60M308 0v30M348 16l14 14M370 12l-24 20" />
        <path d="M1100 0l10 20 90 4M1205 0v60M1242 0v60M1290 0v60M1100 24l260-4M1350 0l6 60M1400 0l-4 40M1190 10l180 22" />
      </g>
    </g>
    <rect width="1920" height="60" fill="url(#top)" />
  </Wallpaper>
);

export default function App() {
  return (
    <Screen>
      <Global />
      <TabStrip>
        <FirefoxView><FirefoxViewIcon /></FirefoxView>
        <Tab $w={286}>
          <TabLine />
          <TabBody $pad={15}>
            <Favicon><Firefox size={20} id="fav" /></Favicon>
            <TabTitle>New Tab</TabTitle>
            <CloseIcon />
          </TabBody>
        </Tab>
        {tabs.map((t, i) => (
          <Tab key={i}>
            <TabLine $color={t.color} $active={t.active} />
            <TabBody $active={t.active}>
              <TabTitle>{t.title}</TabTitle>
              <CloseIcon />
            </TabBody>
          </Tab>
        ))}
        <NewTabButton>
          <Line w={15} sw={1.5}><path d="M7.500.8v13.400M.8 7.500h13.400" /></Line>
        </NewTabButton>
        <WindowControls>
          <Control $w={148}><Line w={16} h={14} sw={1.7}><path d="M1 4l7 7 7-7" /></Line></Control>
          <Control $w={60}><Line w={12} h={14} sw={1}><path d="M.5 6.500h11" /></Line></Control>
          <Control $w={54}>
            <Line w={14} h={15} sw={1.1}><path d="M1 4.500h8v9H1zM4.500 4.500v-3h8v9H9" /></Line>
          </Control>
          <Control $w={58}><Line w={14} sw={1.2}><path d="M.8 1.500l12.400 12M13.200 1.500L.8 13.500" /></Line></Control>
        </WindowControls>
      </TabStrip>

      <NavBar>
        <NavButtons><BackIcon /><ForwardIcon /><ReloadIcon /></NavButtons>
        <UrlBar>
          <ShieldIcon />
          <Insecure><LockIcon /><BarText $ls={-0.27}>Not Secure</BarText></Insecure>
          <Address>
            <BarText>localhost</BarText>
            <BarText $ls={-0.37} $color="#8f8f97">/supermancyber/group-chat.php?group_id=8</BarText>
          </Address>
          <BarText $ls={-0.48} $color="#ff613d">attacker (memb...</BarText>
          <Dot />
          <ContainerIcon />
          <StarSlot><StarIcon /></StarSlot>
        </UrlBar>
        <Actions>
          <Action $w={40}><PocketIcon /></Action>
          <Action $w={54}><AccountIcon /></Action>
          <Action $w={33}><PuzzleIcon /></Action>
          <Action $w={62}><GridPlusIcon /></Action>
          <Action $w={46}><FoxIcon /></Action>
          <Action $w={40}><Line w={15} h={30} sw={1.6}><path d="M.8 7.500h13.400M.8 12.500h13.400M.8 17.500h13.400" /></Line></Action>
        </Actions>
      </NavBar>

      <Page>
        <Title>Group Chat - victim group</Title>
        <ChatBox />
        <MessageInput placeholder="Type your message..." />
        <Button $w={76} $bg="#0d6efd">Send</Button>
        <Button $w={166} $bg="#6c757d">Back to Groups</Button>
      </Page>

      <Taskbar>
        <Backdrop />
        <Apps>
          {apps.map((a, i) => (
            <AppButton key={i} $w={a.w} $active={a.active}>
              {a.icon}
              {a.open && <Pill $active={a.active} />}
              {a.badge && <Badge {...a.badge}>{a.badge.text}</Badge>}
            </AppButton>
          ))}
        </Apps>
        <Tray>
          <TrayIcon $w={40}><Line w={14} h={10} sw={1.9}><path d="M1 8.500l6-6 6 6" /></Line></TrayIcon>
          <TrayIcon $w={40}>
            <svg width="20" height="14" viewBox="0 0 20 14">
              <path d="M2 6c2-7 11-8 13-2l-5 5C7 5 4 5 2 6z" fill="#a6a6aa" />
              <path d="M4 13.500c-2 0-4-1-4-3.700C1 6 4 4.500 7.500 6.500l4 2.500 4-4.800a5 5 0 0 1 .5 9.300z" fill="#fff" />
            </svg>
          </TrayIcon>
          <TrayIcon $w={40}>
            <Line w={20} h={16} sw={1.7}>
              <path d="M1 5.500a12.500 12.500 0 0 1 18 0" stroke="#66646a" /><path d="M3.500 8.300a9 9 0 0 1 13 0M6.200 11a5.300 5.300 0 0 1 7.600 0" />
              <circle cx="10" cy="13.500" r="1.200" fill="#fff" />
            </Line>
          </TrayIcon>
          <TrayIcon $w={20}>
            <Line w={20} h={16} sw={1.4}>
              <path d="M1 5.500h3L8.500 1.500v13L4 10.500H1zM11.500 5.500a4 4 0 0 1 0 5M14 3.500a7 7 0 0 1 0 9M16.500 1.500a10 10 0 0 1 0 13" />
            </Line>
          </TrayIcon>
          <TrayIcon $w={40}>
            <Line w={21} h={20} sw={1.7}>
              <path d="M9 4.500h7.500a2 2 0 0 1 2 2V10M10 15.500H5a2 2 0 0 1-2-2V12" />
              <path d="M8 6.500h8v4l-4 3H5l1-4z" fill="#fff" strokeWidth=".5" />
              <path d="M5 .5L1 6.500h3l-1.500 4L7 5H4.500z" fill="#fff" strokeWidth=".6" />
              <path d="M15.500 18.500l-3.500-3.500c-1-2.500 2.500-3.500 3.500-1.500 1-2 4.500-1 3.500 1.500z" fill="#fff" strokeWidth=".6" />
            </Line>
          </TrayIcon>
          <Clock>2:53 PM<br />3/9/2025</Clock>
        </Tray>
      </Taskbar>
    </Screen>
  );
}
